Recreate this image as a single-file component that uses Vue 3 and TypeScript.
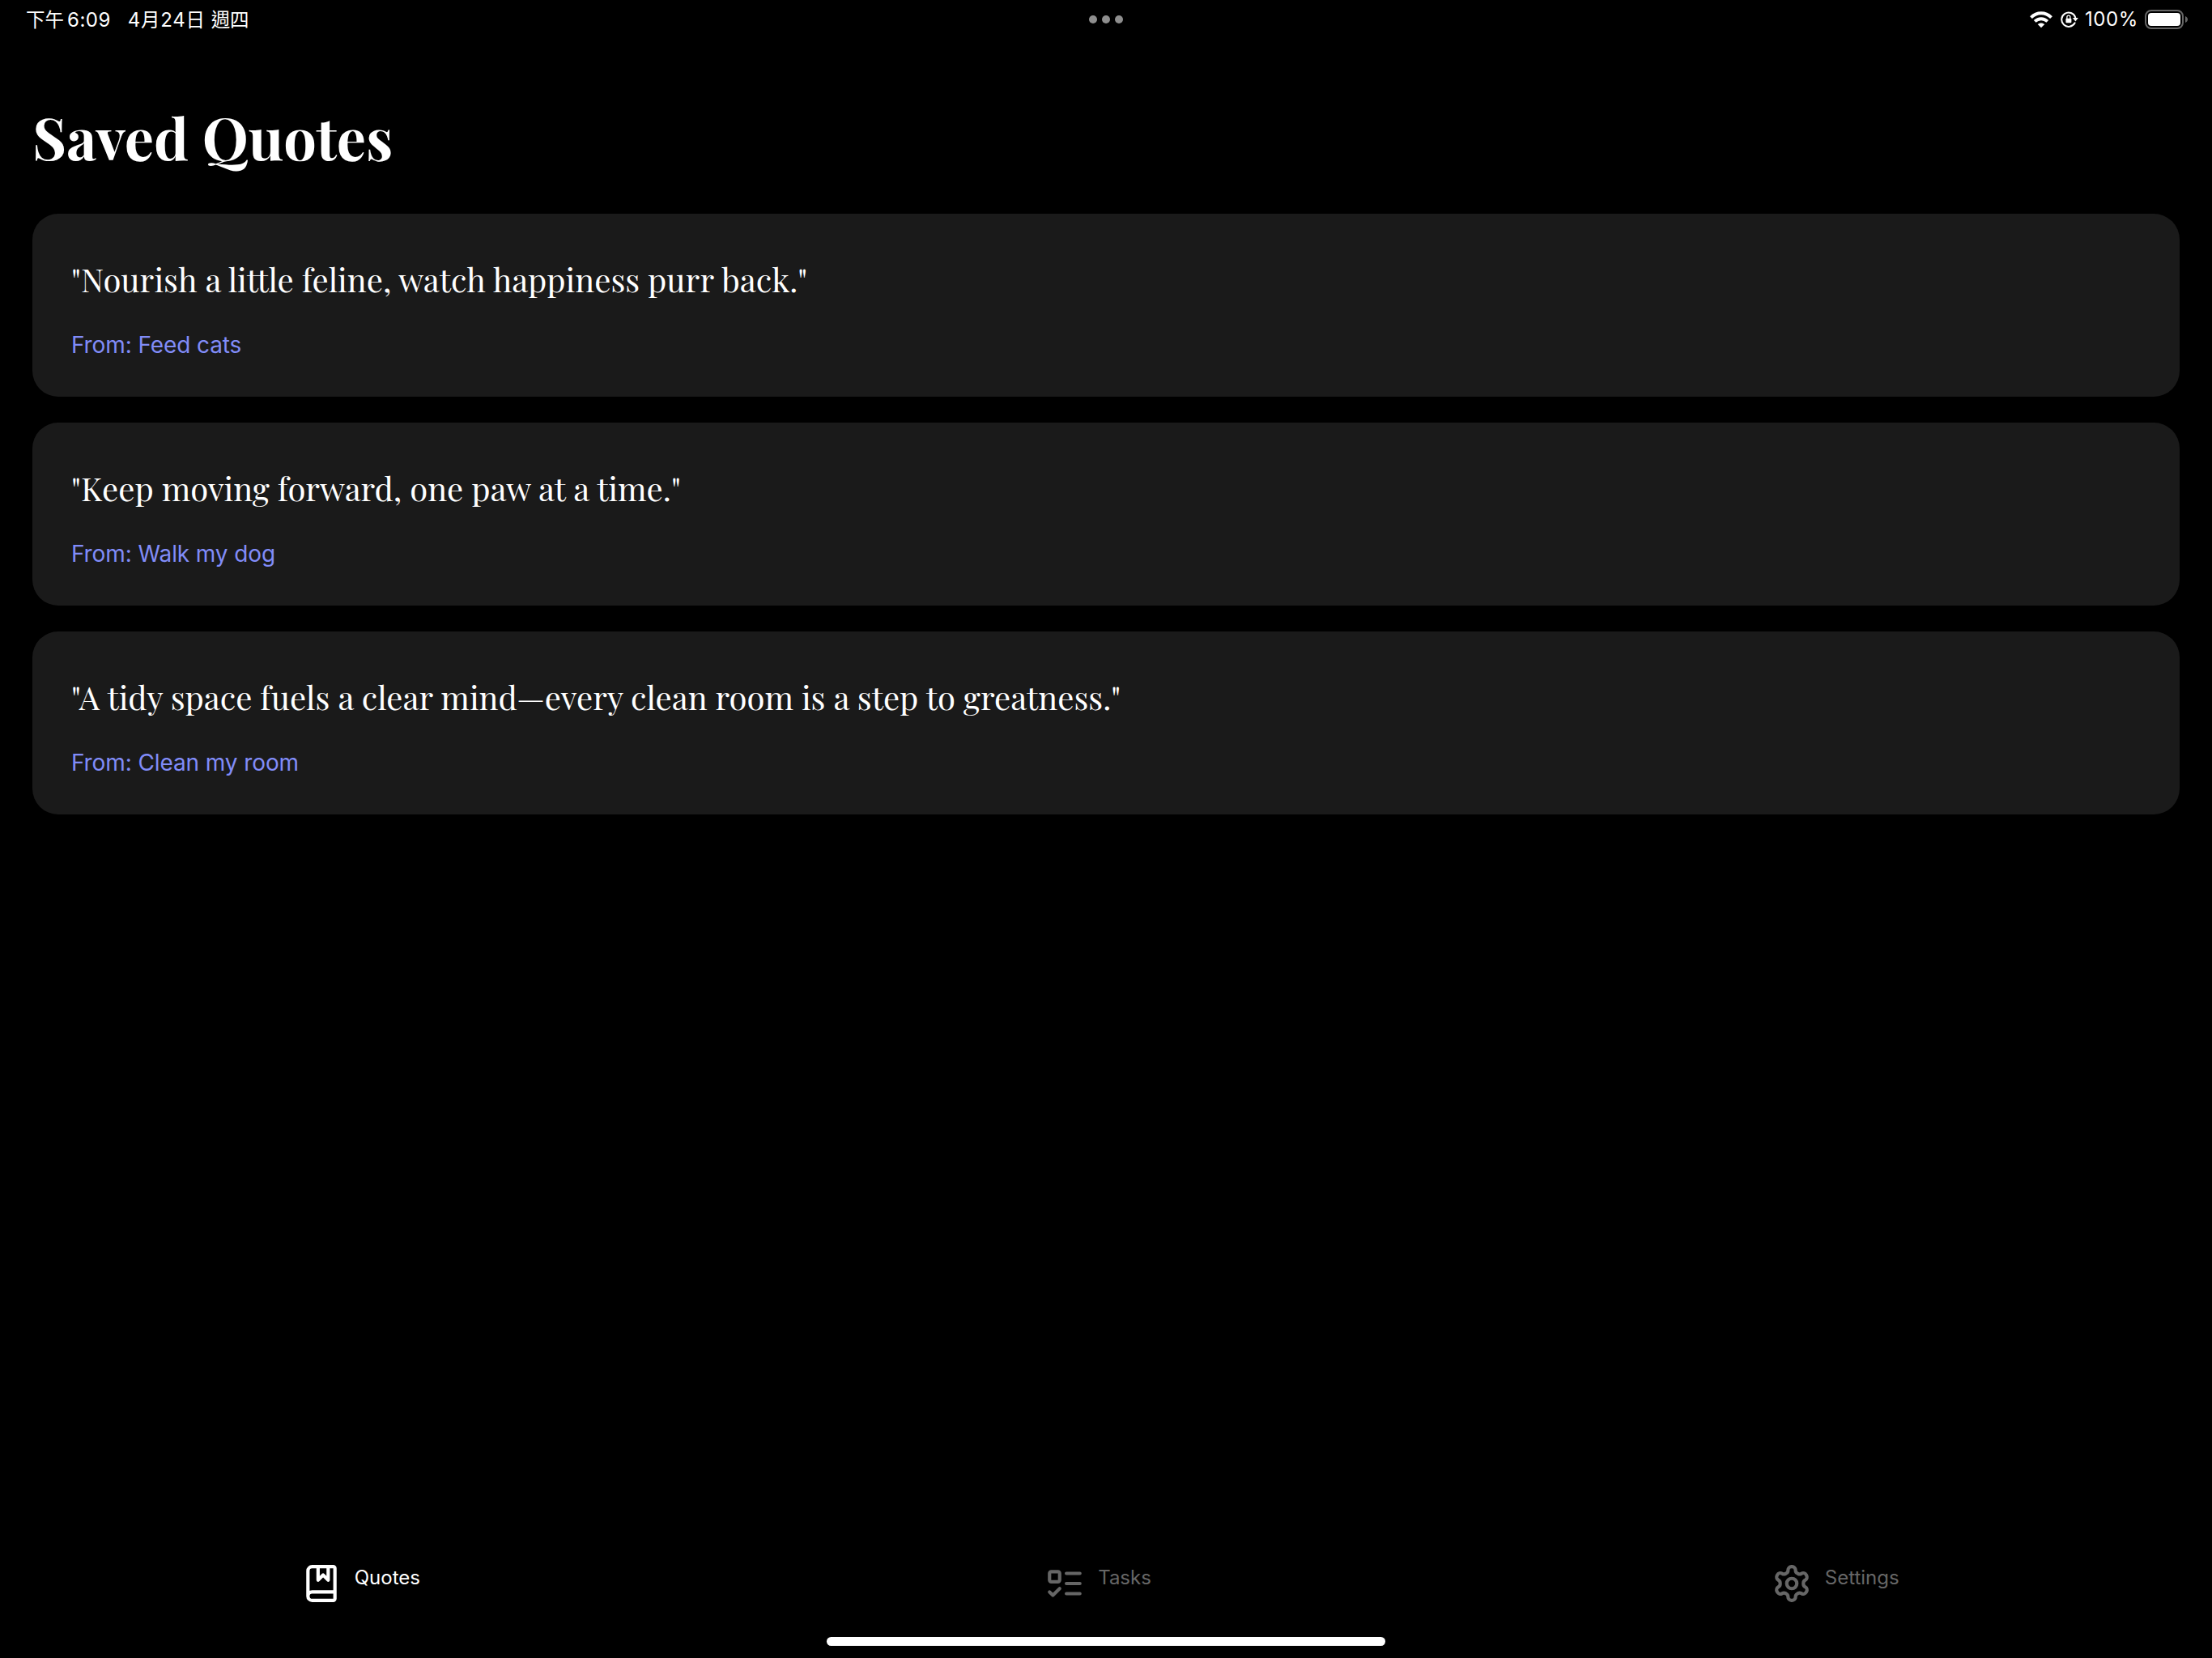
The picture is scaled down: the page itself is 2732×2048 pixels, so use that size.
<script setup lang="ts">
interface Quote {
  text: string
  task: string
}

interface Tab {
  id: 'quotes' | 'tasks' | 'settings'
  label: string
}

const quotes: Quote[] = [
  { text: '"Nourish a little feline, watch happiness purr back."', task: 'Feed cats' },
  { text: '"Keep moving forward, one paw at a time."', task: 'Walk my dog' },
  { text: '"A tidy space fuels a clear mind—every clean room is a step to greatness."', task: 'Clean my room' },
]

const tabs: Tab[] = [
  { id: 'quotes', label: 'Quotes' },
  { id: 'tasks', label: 'Tasks' },
  { id: 'settings', label: 'Settings' },
]
</script>

<template>
  <div class="screen">
    <header class="status">
      <div class="clock">
        <span class="han">下午</span><span class="time">6:09</span>
        <span class="date">4<span class="han">月</span>24<span class="han">日</span></span>
        <span class="han week">週四</span>
      </div>
      <div class="dots"><i></i><i></i><i></i></div>
      <div class="system">
        <svg class="wifi" viewBox="0 0 28 21" width="28" height="21">
          <g fill="none" stroke="#fff" stroke-width="4">
            <path d="M1.5 7.6C8.6 .6 19.4 .6 26.5 7.6" />
            <path d="M6.2 12.4c4.5-4.3 11.1-4.3 15.6 0" />
          </g>
          <path d="M14 20.3l-4.3-4.2c2.4-2.2 6.2-2.2 8.6 0z" fill="#fff" />
        </svg>
        <svg class="lock" viewBox="0 0 22 20" width="22" height="20">
          <path d="M18.2 7.5A8.7 8.7 0 1 0 17.6 14.3" fill="none" stroke="#fff" stroke-width="2" stroke-linecap="round" />
          <path d="M14.8 8h7l-3.4 4.500z" fill="#fff" />
          <rect x="6.4" y="8.7" width="7" height="5.6" rx="1" fill="#fff" />
          <path d="M7.9 9V7.1a2 2 0 0 1 4 0V9" fill="none" stroke="#fff" stroke-width="1.3" />
        </svg>
        <span class="percent">100%</span>
        <svg class="battery" viewBox="0 0 54 24" width="54" height="24">
          <rect x="1" y="1" width="46" height="22" rx="7" fill="none" stroke="#666" stroke-width="2" />
          <rect x="4" y="4" width="40" height="16" rx="4" fill="#fff" />
          <path d="M50 8c4 1.500 4 6.500 0 8z" fill="#666" />
        </svg>
      </div>
    </header>

    <main class="content">
      <h1 class="title">Saved Quotes</h1>
      <article v-for="quote in quotes" :key="quote.task" class="card">
        <p class="quote">{{ quote.text }}</p>
        <p class="source">From: {{ quote.task }}</p>
      </article>
    </main>

    <nav class="tabs">
      <a v-for="tab in tabs" :key="tab.id" class="tab" :class="{ active: tab.id === 'quotes' }">
        <svg class="icon" viewBox="0 0 24 24">
          <template v-if="tab.id === 'quotes'">
            <path d="M4 19.5v-15A2.500 2.500 0 0 1 6.500 2H19a1 1 0 0 1 1 1v18a1 1 0 0 1-1 1H6.500a1 1 0 0 1 0-5H20" />
            <path d="M10 2v8l3-3 3 3V2" />
          </template>
          <template v-else-if="tab.id === 'tasks'">
            <rect x="3" y="5" width="6" height="6" rx="1" />
            <path d="m3 17 2 2 4-4M13 6h8M13 12h8M13 18h8" />
          </template>
          <template v-else>
            <path d="M12.220 2h-.44a2 2 0 0 0-2 2v.18a2 2 0 0 1-1 1.730l-.43.25a2 2 0 0 1-2 0l-.15-.08a2 2 0 0 0-2.730.73l-.22.38a2 2 0 0 0 .73 2.730l.15.1a2 2 0 0 1 1 1.720v.51a2 2 0 0 1-1 1.740l-.15.09a2 2 0 0 0-.73 2.730l.22.38a2 2 0 0 0 2.730.73l.15-.08a2 2 0 0 1 2 0l.43.25a2 2 0 0 1 1 1.730V20a2 2 0 0 0 2 2h.44a2 2 0 0 0 2-2v-.18a2 2 0 0 1 1-1.730l.43-.25a2 2 0 0 1 2 0l.15.08a2 2 0 0 0 2.730-.73l.22-.39a2 2 0 0 0-.73-2.730l-.15-.08a2 2 0 0 1-1-1.740v-.5a2 2 0 0 1 1-1.740l.15-.09a2 2 0 0 0 .73-2.730l-.22-.38a2 2 0 0 0-2.730-.73l-.15.08a2 2 0 0 1-2 0l-.43-.25a2 2 0 0 1-1-1.730V4a2 2 0 0 0-2-2z" />
            <circle cx="12" cy="12" r="3" />
          </template>
        </svg>
        <span class="label">{{ tab.label }}</span>
      </a>
    </nav>
    <div class="home"></div>
  </div>
</template>

<style>
body {
  margin: 0;
  background: #000;
}
</style>

<style scoped>
.screen {
  width: 2732px;
  height: 2048px;
  display: flex;
  flex-direction: column;
  overflow: hidden;
  background: #000;
  color: #fff;
  font-family: Inter, "Noto Sans CJK TC", sans-serif;
}
.status {
  height: 48px;
  flex: none;
  display: grid;
  grid-template-columns: 1fr auto 1fr;
  align-items: center;
}
.clock {
  display: flex;
  align-items: baseline;
  padding-left: 32px;
  font-size: 24px;
  line-height: 30px;
  font-weight: 400;
  white-space: nowrap;
}
.han {
  font-family: "Noto Sans CJK TC", sans-serif;
  font-size: 23.5px;
  line-height: 30px;
  font-weight: 400;
}
.time {
  margin-left: 4px;
  letter-spacing: 0.5px;
}
.date {
  margin-left: 21px;
  letter-spacing: 0.7px;
}
.week {
  margin-left: 7px;
}
.dots {
  display: flex;
  gap: 6px;
}
.dots i {
  width: 10px;
  height: 10px;
  border-radius: 50%;
  background: #8e8e8e;
}
.system {
  display: flex;
  align-items: center;
  justify-content: flex-end;
  padding-right: 29px;
}
.lock {
  margin-left: 10px;
}
.percent {
  width: 64px;
  margin: 0 10px 0 8px;
  font-size: 24px;
  line-height: 32px;
  font-weight: 400;
  letter-spacing: 0.6px;
  white-space: nowrap;
}
.content {
  flex: 1;
  display: flex;
  flex-direction: column;
  gap: 32px;
  padding: 72px 40px 0;
}
.title {
  margin: 0 0 16px;
  height: 96px;
  font: bold 72px/96px "Playfair Display", "Liberation Serif", serif;
  letter-spacing: -0.1px;
  white-space: nowrap;
}
.card {
  box-sizing: border-box;
  height: 226px;
  padding: 48px;
  border-radius: 32px;
  background: #1a1a1a;
}
.quote {
  margin: 0 0 26px;
  font: 40px/66px "Playfair Display", "Liberation Serif", serif;
  white-space: nowrap;
}
.source {
  margin: 0;
  font-size: 28px;
  line-height: 44px;
  letter-spacing: -0.1px;
  color: #818cf8;
}
.tabs {
  display: flex;
  height: 117px;
  flex: none;
}
.tab {
  flex: 1;
  display: flex;
  justify-content: center;
  gap: 16px;
  padding-right: 20px;
  color: #666;
}
.tab.active {
  color: #fff;
}
.icon {
  width: 50px;
  height: 50px;
  fill: none;
  stroke: currentColor;
  stroke-width: 2;
  stroke-linecap: round;
  stroke-linejoin: round;
}
.label {
  font-size: 24px;
  line-height: 36px;
}
.home {
  align-self: center;
  flex: none;
  width: 690px;
  height: 11px;
  margin-top: -26px;
  margin-bottom: 15px;
  border-radius: 6px;
  background: #fff;
}
</style>
